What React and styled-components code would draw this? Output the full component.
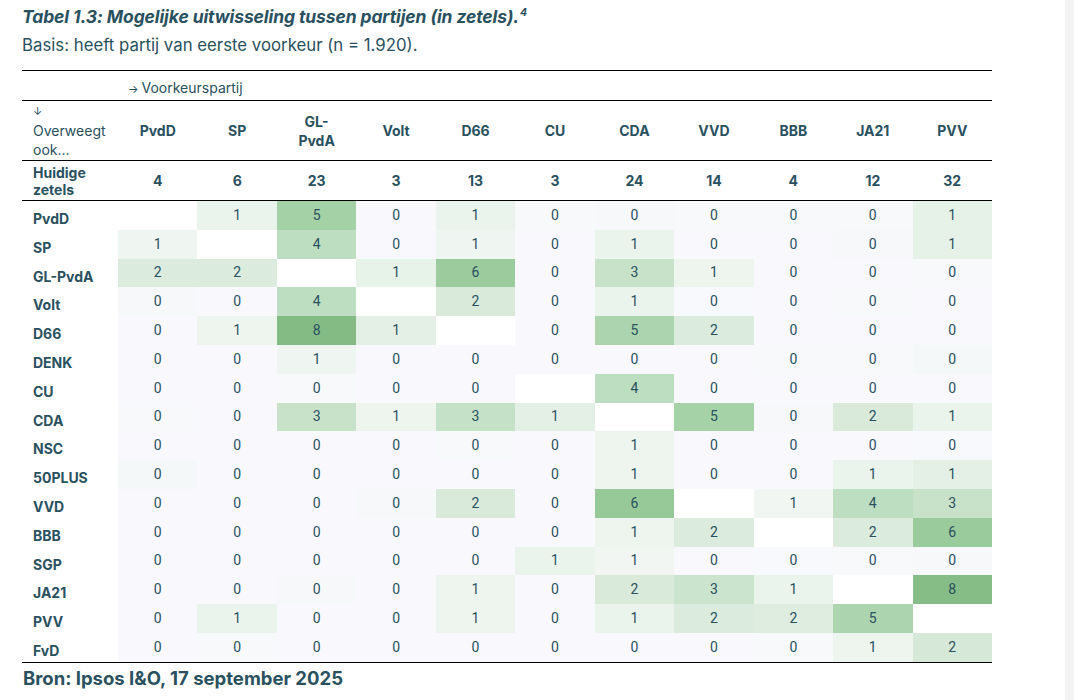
import React from "react";
import styled, { createGlobalStyle } from "styled-components";

const Global = createGlobalStyle`
  html, body { margin: 0; padding: 0; background: #ffffff; overflow: hidden; }
  * { box-sizing: border-box; }
`;

const INK = "#2a5160";

const Page = styled.div`
  display: flex;
  width: 1074px;
  height: 700px;
  font-family: Inter, "Open Sans", sans-serif;
  color: ${INK};
`;

const Main = styled.div`
  flex: 1;
  padding: 7px 0 0 22px;
`;

const Gutter = styled.div`
  width: 9px;
  background: #f3f3f3;
`;

const Title = styled.h1`
  margin: 0;
  font-size: 17.5px;
  line-height: 20px;
  font-weight: 700;
  font-style: italic;
  letter-spacing: -0.1px;
  sup {
    font-size: 10.5px;
    line-height: 0;
    vertical-align: 7px;
    margin-left: 1px;
  }
`;

const Subtitle = styled.p`
  margin: 8px 0 0;
  font-size: 16.8px;
  line-height: 20px;
  font-weight: 400;
`;

const Table = styled.div`
  width: 970px;
  margin-top: 15px;
  border-top: 1px solid #000;
  border-bottom: 1px solid #000;
`;

const Row = styled.div`
  display: grid;
  grid-template-columns: 96px repeat(11, 1fr);
  height: ${(p) => p.$h}px;
  border-bottom: ${(p) => (p.$rule ? "1px solid #000" : "0")};
`;

const SpanCell = styled.div`
  grid-column: 2 / -1;
  align-self: end;
  padding: 0 0 2px 10px;
  font-size: 14px;
  line-height: 18px;
`;

const Arrow = styled.span`
  font-size: 11px;
  margin-right: 3px;
`;

const CornerCell = styled.div`
  display: flex;
  flex-direction: column;
  justify-content: center;
  padding-left: 11px;
  font-size: 14px;
  line-height: 19px;
`;

const HeadCell = styled.div`
  display: flex;
  align-items: center;
  justify-content: center;
  text-align: center;
  font-size: 14px;
  line-height: 19px;
  font-weight: 700;
  padding: 0 18px;
`;

const SeatLabel = styled.div`
  display: flex;
  align-items: center;
  padding-left: 11px;
  font-size: 14px;
  line-height: 17px;
  font-weight: 700;
`;

const SeatCell = styled.div`
  display: flex;
  align-items: center;
  justify-content: center;
  font-size: 14px;
  font-weight: 700;
`;

const RowLabel = styled.div`
  padding: 9px 0 0 11px;
  font-size: 14px;
  line-height: 18px;
  font-weight: 700;
  white-space: nowrap;
`;

const DataCell = styled.div`
  display: flex;
  align-items: center;
  justify-content: center;
  padding-bottom: 1px;
  font-family: Roboto, Inter, sans-serif;
  font-size: 14px;
  color: ${INK};
  background: ${(p) => p.$bg};
`;

const Source = styled.p`
  margin: 5px 0 0 1px;
  font-size: 18.5px;
  line-height: 20px;
  font-weight: 700;
`;

const cols = ["PvdD", "SP", "GL-\nPvdA", "Volt", "D66", "CU", "CDA", "VVD", "BBB", "JA21", "PVV"];
const seats = [4, 6, 23, 3, 13, 3, 24, 14, 4, 12, 32];

const N = null;
const rows = [
  ["PvdD", [N, 1, 5.2, 0, 1, 0.1, 0.25, 0.1, 0.1, 0.1, 1.3]],
  ["SP", [0.7, N, 4, 0, 0.7, 0, 1, 0, 0, 0.25, 1.3]],
  ["GL-PvdA", [1.9, 1.9, N, 1.2, 5.7, 0, 3.1, 0.8, 0, 0, 0.1]],
  ["Volt", [0.25, 0, 4, N, 2, 0, 1, 0.05, 0, 0.1, 0]],
  ["D66", [0, 0.8, 8, 1.4, N, 0, 4.8, 1.9, 0, 0, 0]],
  ["DENK", [0, 0, 0.7, 0, 0, 0, 0, 0, 0.1, 0.1, 0.3]],
  ["CU", [0, 0, 0.1, 0, 0, N, 4, 0, 0, 0, 0]],
  ["CDA", [0.1, 0, 3, 0.8, 3.3, 1.4, N, 5.1, 0.25, 2, 1]],
  ["NSC", [0, 0, 0, 0, 0.1, 0, 0.8, 0, 0, 0, 0.05]],
  ["50PLUS", [0.3, 0, 0, 0, 0, 0, 0.8, 0, 0, 1, 1.4]],
  ["VVD", [0, 0, 0, 0.25, 2, 0, 6, N, 0.6, 4, 3]],
  ["BBB", [0, 0, 0, 0, 0, 0, 0.8, 1.9, N, 1.9, 5.8]],
  ["SGP", [0, 0, 0, 0, 0, 1, 0.6, 0, 0.05, 0.1, 0.2]],
  ["JA21", [0, 0, 0.25, 0, 0.8, 0, 2, 2.8, 1, N, 7.8]],
  ["PVV", [0, 1, 0, 0, 0.8, 0, 1, 1.9, 1.7, 4.8, N]],
  ["FvD", [0, 0.1, 0, 0, 0, 0, 0, 0, 0.1, 0.8, 2.2]],
];

const stops = [
  [0, [249, 249, 253]],
  [1, [235, 244, 236]],
  [2, [217, 234, 219]],
  [3, [200, 226, 202]],
  [4, [190, 222, 193]],
  [5, [168, 211, 170]],
  [6, [151, 201, 152]],
  [8, [132, 187, 132]],
];

function shade(v) {
  if (v === null) return "#ffffff";
  for (let i = 1; i < stops.length; i++) {
    const [v1, c1] = stops[i];
    const [v0, c0] = stops[i - 1];
    if (v <= v1) {
      const t = (v - v0) / (v1 - v0);
      const c = c0.map((x, k) => Math.round(x + (c1[k] - x) * t));
      return `rgb(${c[0]}, ${c[1]}, ${c[2]})`;
    }
  }
  return "rgb(132, 187, 132)";
}

export default function App() {
  return (
    <Page>
      <Global />
      <Main>
        <Title>
          Tabel 1.3: Mogelijke uitwisseling tussen partijen (in zetels).<sup>4</sup>
        </Title>
        <Subtitle>Basis: heeft partij van eerste voorkeur (n = 1.920).</Subtitle>
        <Table>
          <Row $h={30} $rule>
            <SpanCell>
              <Arrow>→</Arrow>Voorkeurspartij
            </SpanCell>
          </Row>
          <Row $h={60} $rule>
            <CornerCell>
              <Arrow>↓</Arrow>
              <span>Overweegt</span>
              <span>ook...</span>
            </CornerCell>
            {cols.map((c) => (
              <HeadCell key={c}>
                {c.includes("\n") ? (
                  <span>
                    {c.split("\n")[0]}
                    <br />
                    {c.split("\n")[1]}
                  </span>
                ) : (
                  c
                )}
              </HeadCell>
            ))}
          </Row>
          <Row $h={40} $rule>
            <SeatLabel>
              Huidige
              <br />
              zetels
            </SeatLabel>
            {seats.map((s, i) => (
              <SeatCell key={i}>{s}</SeatCell>
            ))}
          </Row>
          {rows.map(([label, vals]) => (
            <Row key={label} $h={28.8}>
              <RowLabel>{label}</RowLabel>
              {vals.map((v, i) => (
                <DataCell key={i} $bg={shade(v)}>
                  {v === null ? "" : Math.round(v)}
                </DataCell>
              ))}
            </Row>
          ))}
        </Table>
        <Source>Bron: Ipsos I&amp;O, 17 september 2025</Source>
      </Main>
      <Gutter />
    </Page>
  );
}
